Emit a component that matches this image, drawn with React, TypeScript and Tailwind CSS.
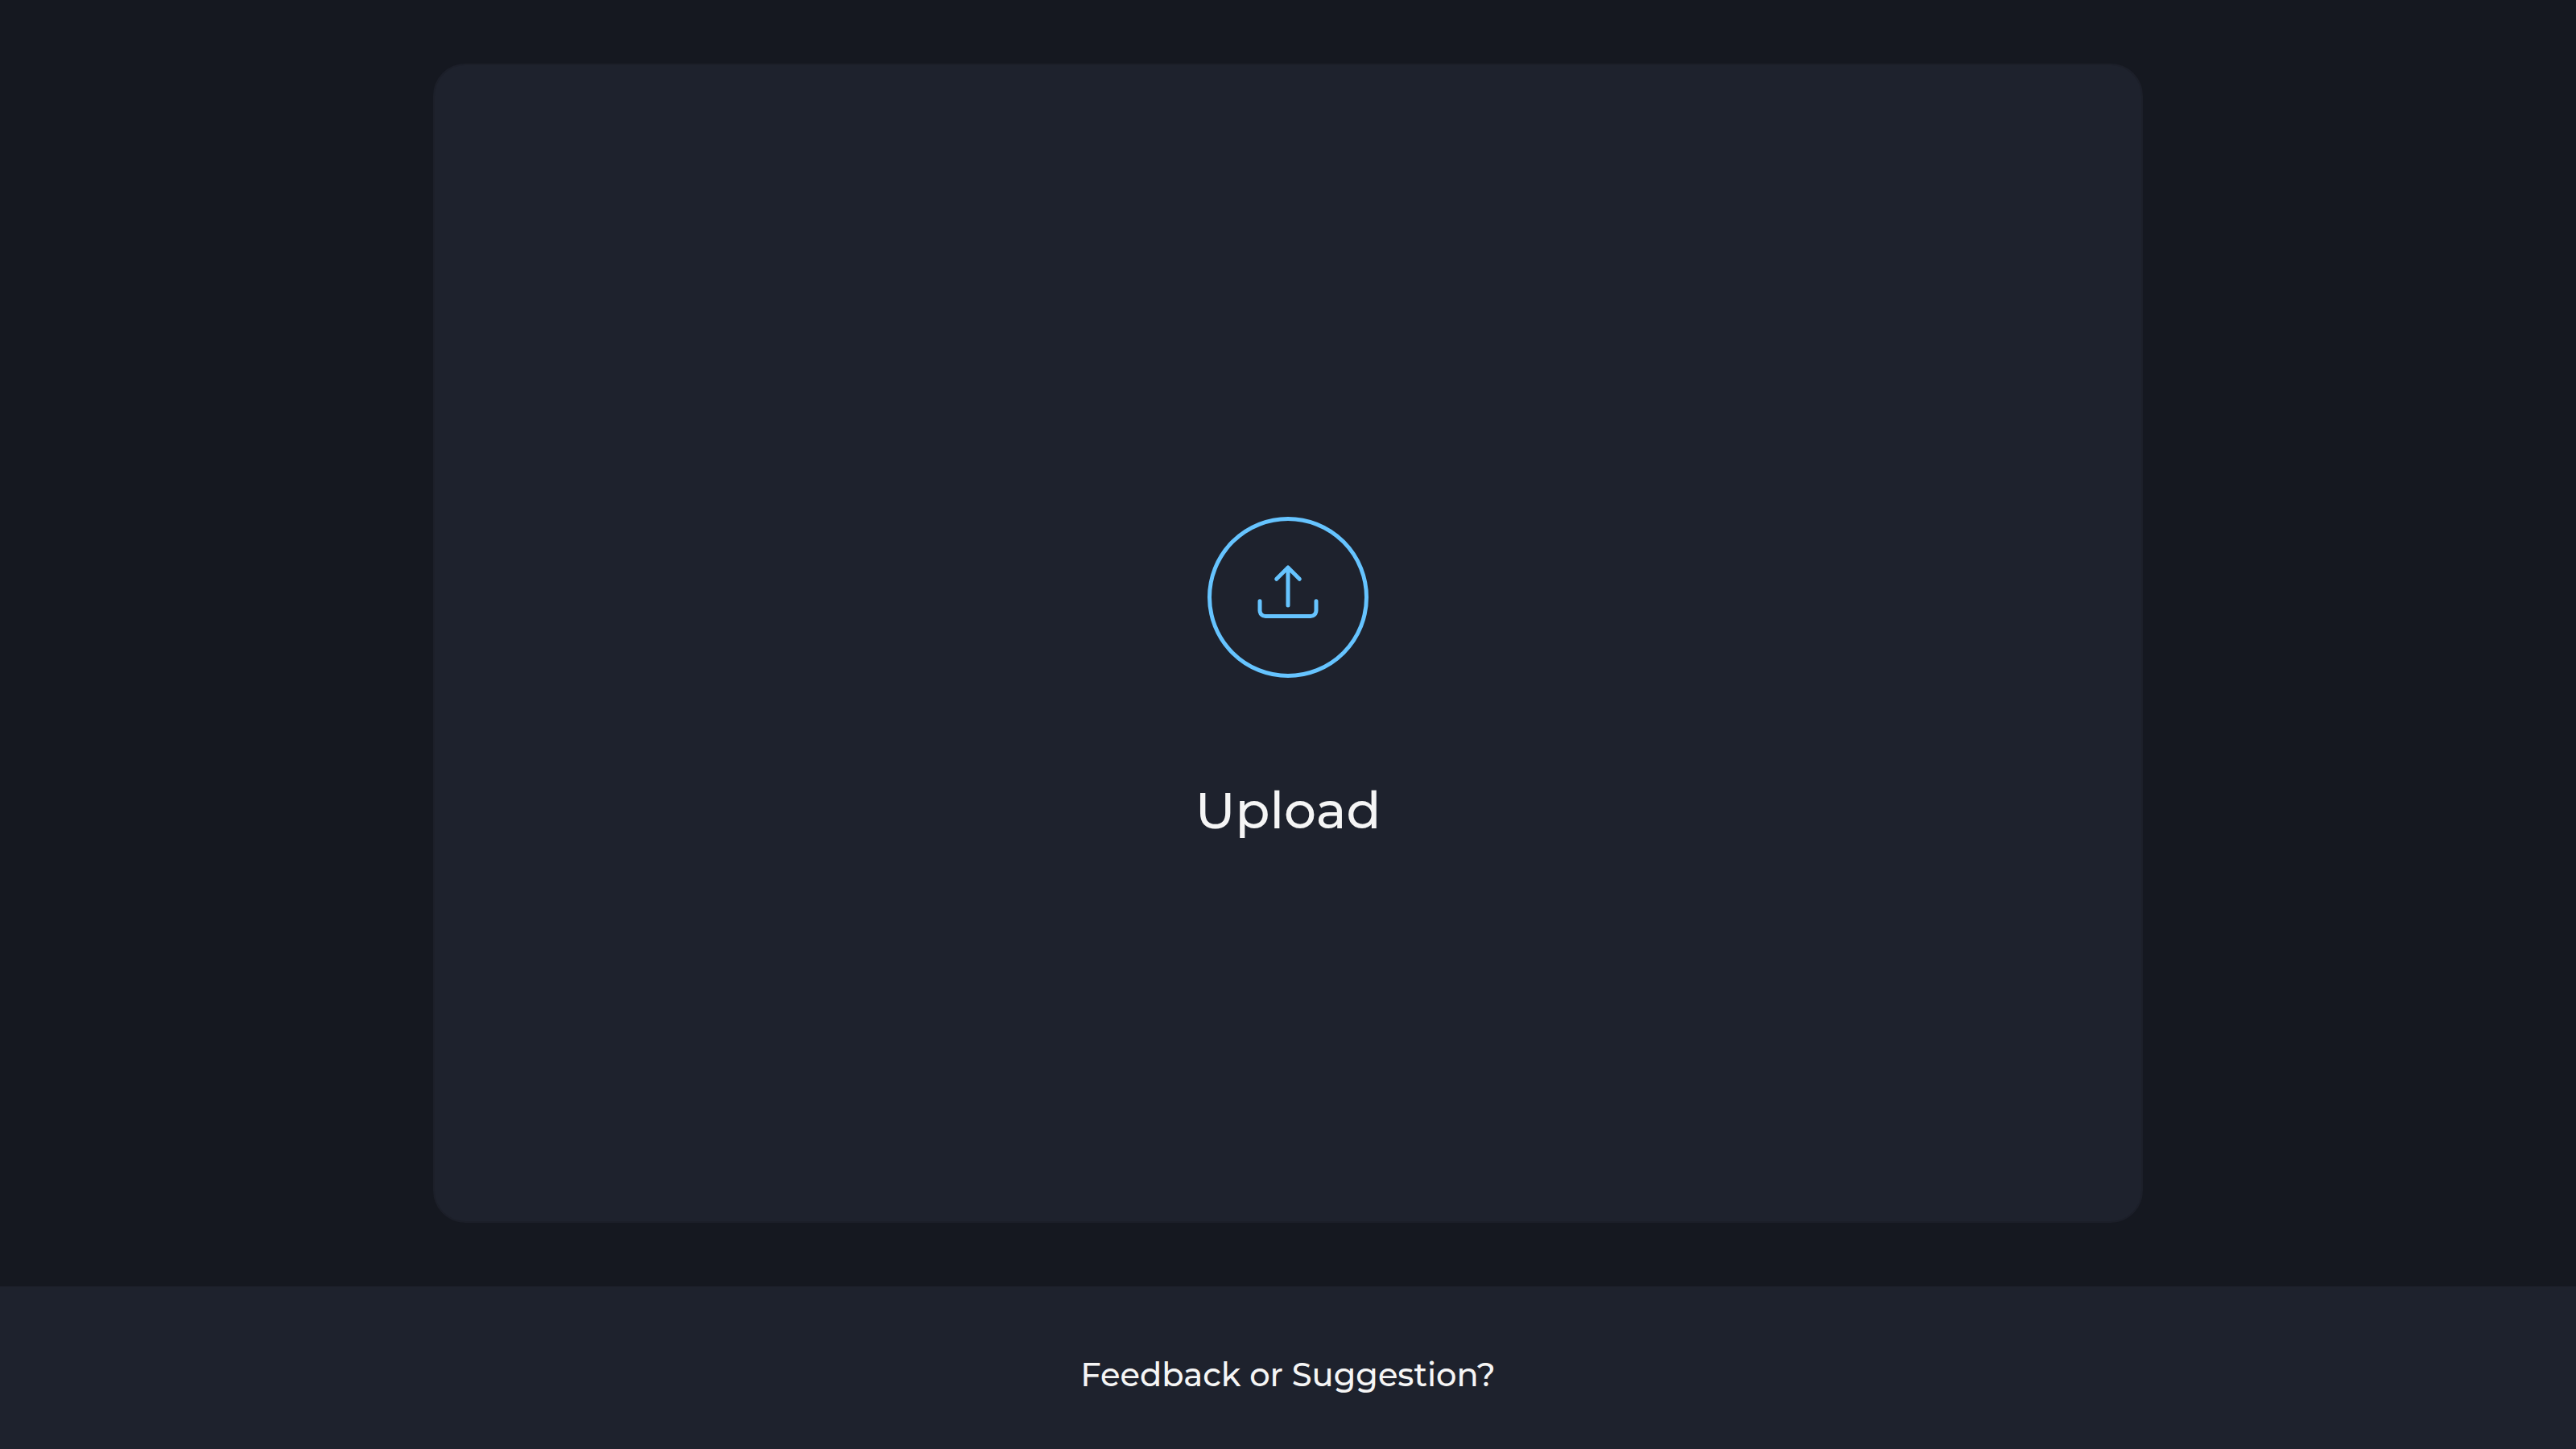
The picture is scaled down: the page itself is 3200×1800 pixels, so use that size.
function UploadIcon() {
  return (
    <svg
      viewBox="0 0 200 200"
      className="size-50"
      fill="none"
      stroke="#66c4ff"
      strokeWidth="5"
      strokeLinecap="round"
      strokeLinejoin="round"
      aria-hidden="true"
    >
      <circle cx="100" cy="100" r="97.5" />
      <path d="M100 110V63M85.7 77.3L100 63L114.3 77.3" />
      <path d="M65 104.7V116.5A7 7 0 0 0 72 123.5H128A7 7 0 0 0 135 116.5V104.7" />
    </svg>
  );
}

export default function App() {
  return (
    <div className="flex min-h-screen flex-col bg-[#151820] font-[Montserrat,Inter,sans-serif] font-medium text-[#f5f5f5]">
      <main className="flex grow items-center justify-center">
        <button
          type="button"
          className="flex h-[80vh] w-[66.4%] cursor-pointer flex-col items-center justify-center gap-32 rounded-[40px] border-2 border-[#1c1f29] bg-[#1e222d] pt-22"
        >
          <UploadIcon />
          <span className="text-[63px] leading-[74px]">Upload</span>
        </button>
      </main>
      <footer className="flex justify-center bg-[#1e222d] pt-[86px] pb-[68px]">
        <a href="#feedback" className="text-[40px] leading-12">
          Feedback or Suggestion?
        </a>
      </footer>
    </div>
  );
}
